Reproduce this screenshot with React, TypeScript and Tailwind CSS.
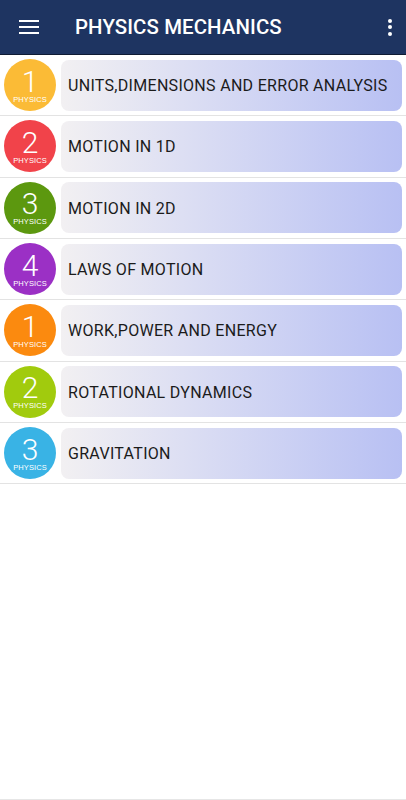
import React from "react";

const topics = [
  { n: "1", title: "UNITS,DIMENSIONS AND ERROR ANALYSIS", color: "bg-[#fbbb36]" },
  { n: "2", title: "MOTION IN 1D", color: "bg-[#f1434a]" },
  { n: "3", title: "MOTION IN 2D", color: "bg-[#5c980f]" },
  { n: "4", title: "LAWS OF MOTION", color: "bg-[#9b30c5]" },
  { n: "1", title: "WORK,POWER AND ENERGY", color: "bg-[#fb8a0f]" },
  { n: "2", title: "ROTATIONAL DYNAMICS", color: "bg-[#a1cb0d]" },
  { n: "3", title: "GRAVITATION", color: "bg-[#39b3e5]" },
];

export default function App() {
  return (
    <div className="w-[406px] h-[800px] bg-white flex flex-col font-['Roboto',sans-serif] border-b border-[#e6e6e6]">
      <header className="h-[55px] bg-[#1e3461] border-b border-[#0f1b33] flex items-center shrink-0">
        <div className="w-[75px] flex justify-start pl-[19px]">
          <div className="flex flex-col gap-[3.5px]">
            <span className="block w-[20px] h-[2.5px] bg-white" />
            <span className="block w-[20px] h-[2.5px] bg-white" />
            <span className="block w-[20px] h-[2.5px] bg-white" />
          </div>
        </div>
        <h1 className="flex-1 text-white text-[20.4px] font-medium tracking-[0.1px] pt-[1px]">PHYSICS MECHANICS</h1>
        <div className="w-[30px] flex flex-col items-center gap-[2.5px] pr-[2px]">
          <span className="block w-[4px] h-[4px] rounded-full bg-white" />
          <span className="block w-[4px] h-[4px] rounded-full bg-white" />
          <span className="block w-[4px] h-[4px] rounded-full bg-white" />
        </div>
      </header>
      <ul>
        {topics.map((t, i) => (
          <li key={i} className="h-[61.33px] border-b border-[#e3e3e3] flex items-center pl-[4px] pr-[4px] gap-[5px]">
            <div className={`w-[52px] h-[52px] rounded-full ${t.color} flex flex-col items-center justify-center text-white shrink-0`}>
              <div className="flex flex-col items-center mt-[2px]">
                <span className="text-[30px] font-light leading-[26px]">{t.n}</span>
                <span className="text-[7.5px] leading-[9px] tracking-[0.1px] font-['Liberation_Sans',sans-serif]">PHYSICS</span>
              </div>
            </div>
            <div className="flex-1 h-[51px] rounded-[8px] bg-gradient-to-r from-[#f2f0f2] to-[#b8c0f3] flex items-center pl-[7px] pt-[2px]">
              <span className="text-[16px] text-[#1b1b1b] tracking-[0.3px]">{t.title}</span>
            </div>
          </li>
        ))}
      </ul>
    </div>
  );
}
